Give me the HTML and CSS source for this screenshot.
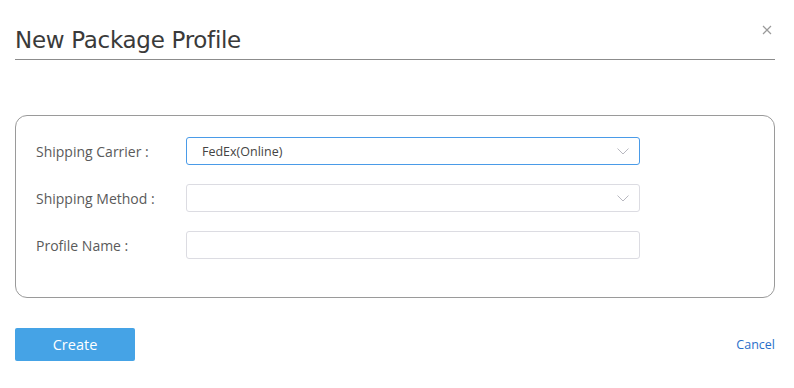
FILE: index.html
```html
<!DOCTYPE html>
<html lang="en">
<head>
    <meta charset="UTF-8">
    <title>New Package Profile</title>
    <link rel="stylesheet" href="styles.css">
</head>
<body>
    <div class="modal">
        <!-- Hlavička -->
        <div class="modal-header">
            <h1>New Package Profile</h1>
            <button class="close-btn" aria-label="Close">
                <svg width="10" height="10" viewBox="0 0 10 10"><path d="M1 1L9 9M9 1L1 9" stroke="#9a9a9a" stroke-width="1.2"/></svg>
            </button>
        </div>

        <div class="profile-card">
            <div class="form-row">
                <label>Shipping Carrier :</label>
                <div class="field select active">
                    <span>FedEx(Online)</span>
                    <svg class="chevron" width="12" height="7" viewBox="0 0 12 7"><path d="M0.5 0.5L6 6L11.5 0.5" fill="none" stroke="#b8b8c0" stroke-width="1"/></svg>
                </div>
            </div>
            <div class="form-row">
                <label>Shipping Method :</label>
                <div class="field select">
                    <span></span>
                    <svg class="chevron" width="12" height="7" viewBox="0 0 12 7"><path d="M0.5 0.5L6 6L11.5 0.5" fill="none" stroke="#b8b8c0" stroke-width="1"/></svg>
                </div>
            </div>
            <div class="form-row">
                <label>Profile Name :</label>
                <input type="text" class="field">
            </div>
        </div>

        <div class="modal-footer">
            <button class="create-btn">Create</button>
            <a href="#" class="cancel-link">Cancel</a>
        </div>
    </div>
</body>
</html>
```

FILE: styles.css
```css
* { margin: 0; padding: 0; box-sizing: border-box; }
body { background: #fff; font-family: 'Open Sans', sans-serif; color: #555; }
.modal { width: 794px; padding: 0 19px 0 15px; }
.modal-header { position: relative; padding-top: 26px; border-bottom: 1px solid #8c8c8c; height: 60px; }
.modal-header h1 { font-family: 'DejaVu Sans', sans-serif; font-weight: normal; font-size: 23px; color: #3a3a3a; letter-spacing: -0.3px; line-height: 28px; }
.close-btn { position: absolute; right: 3px; top: 25px; background: none; border: none; width: 10px; height: 10px; cursor: pointer; display: flex; }
.profile-card { margin-top: 55px; border: 1px solid #9a9a9a; border-radius: 12px; height: 183px; padding: 21px 0 0 20px; display: flex; flex-direction: column; gap: 19px; }
.form-row { display: flex; align-items: center; height: 28px; }
.form-row label { width: 150px; font-size: 14px; color: #5a5a5a; }
.field { width: 454px; height: 28px; border: 1px solid #dcdce2; border-radius: 3px; background: #fff; font-family: 'Open Sans', sans-serif; font-size: 12.5px; color: #444; outline: none; }
.select { display: flex; align-items: center; justify-content: space-between; padding: 0 10px 0 15px; }
.select.active { border-color: #4a9be8; }
.modal-footer { display: flex; justify-content: space-between; align-items: center; margin-top: 30px; }
.create-btn { width: 120px; height: 33px; background: #45a3e6; color: #fff; border: none; border-radius: 2px; font-family: 'Open Sans', sans-serif; font-size: 14.5px; cursor: pointer; }
.cancel-link { color: #2a6fca; font-size: 12.5px; text-decoration: none; }
```
